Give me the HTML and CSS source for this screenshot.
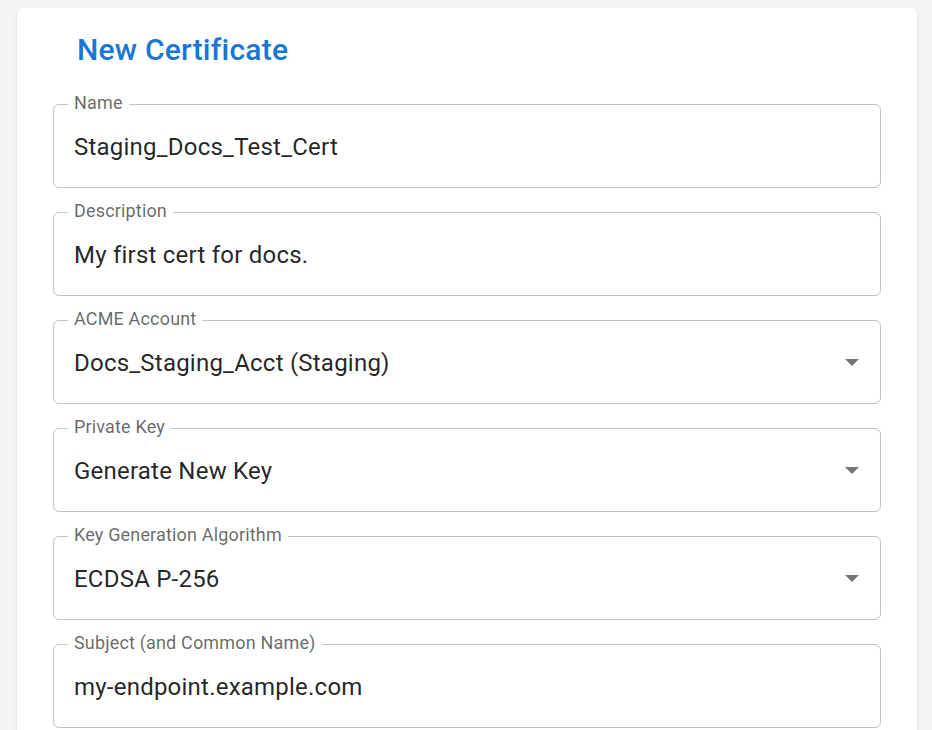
FILE: index.html
```html
<!DOCTYPE html>
<html lang="en">
<head>
<meta charset="utf-8">
<title>New Certificate</title>
<link rel="stylesheet" href="styles.css">
</head>
<body>
<main class="card">
  <h1 class="title">New Certificate</h1>
  <form class="form">
    <div class="field">
      <span class="label">Name</span>
      <span class="value">Staging_Docs_Test_Cert</span>
    </div>
    <div class="field">
      <span class="label">Description</span>
      <span class="value">My first cert for docs.</span>
    </div>
    <div class="field">
      <span class="label">ACME Account</span>
      <span class="value">Docs_Staging_Acct (Staging)</span>
      <svg class="arrow" width="14" height="7" viewBox="0 0 14 7"><polygon points="0,0 14,0 7,7"/></svg>
    </div>
    <div class="field">
      <span class="label">Private Key</span>
      <span class="value">Generate New Key</span>
      <svg class="arrow" width="14" height="7" viewBox="0 0 14 7"><polygon points="0,0 14,0 7,7"/></svg>
    </div>
    <div class="field">
      <span class="label">Key Generation Algorithm</span>
      <span class="value">ECDSA P-256</span>
      <svg class="arrow" width="14" height="7" viewBox="0 0 14 7"><polygon points="0,0 14,0 7,7"/></svg>
    </div>
    <div class="field">
      <span class="label">Subject (and Common Name)</span>
      <span class="value">my-endpoint.example.com</span>
    </div>
  </form>
</main>
</body>
</html>
```
FILE: styles.css
```css
html, body {
  margin: 0;
  padding: 0;
  background: #f4f4f4;
  font-family: Roboto, "Liberation Sans", Arial, sans-serif;
  height: 100%;
  overflow: hidden;
}
body {
  padding: 8px 15px 0 17px;
  box-sizing: border-box;
}
.card {
  background: #ffffff;
  border-radius: 6px;
  box-shadow: 0 1px 3px rgba(0, 0, 0, 0.12);
  padding: 24px 36px 40px 36px;
  min-height: 800px;
}
.title {
  margin: 0 0 36px 24px;
  font-size: 30px;
  line-height: 36px;
  font-weight: 500;
  letter-spacing: 0.0075em;
  color: #1976d2;
}
.form {
  display: flex;
  flex-direction: column;
  gap: 24px;
}
.field {
  position: relative;
  height: 84px;
  box-sizing: border-box;
  border: 1px solid #c4c4c4;
  border-radius: 6px;
  display: flex;
  align-items: center;
  padding: 1px 21px 0 20px;
}
.label {
  position: absolute;
  top: -11px;
  left: 14px;
  padding: 0 6px;
  background: #ffffff;
  font-size: 18px;
  line-height: 18px;
  letter-spacing: 0.00938em;
  color: rgba(0, 0, 0, 0.6);
}
.value {
  font-size: 24px;
  line-height: 28px;
  letter-spacing: 0.00938em;
  color: rgba(0, 0, 0, 0.87);
  flex: 1;
}
.arrow {
  fill: #757575;
  flex: none;
}
```
